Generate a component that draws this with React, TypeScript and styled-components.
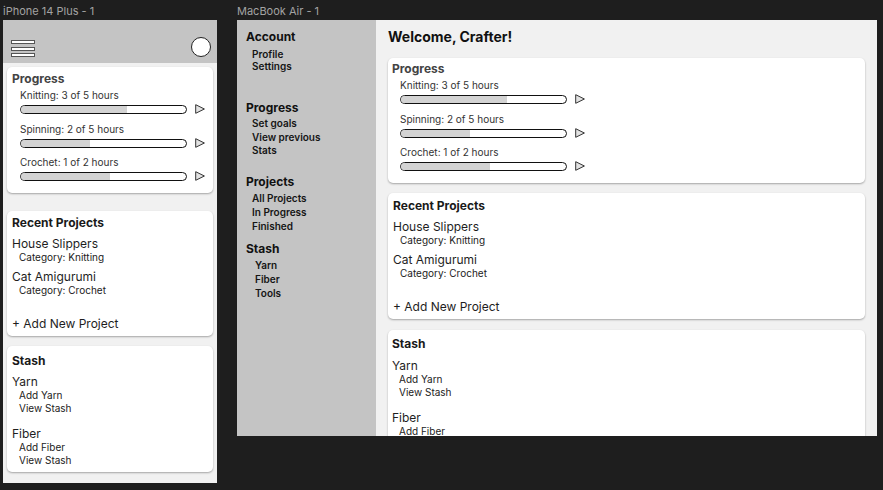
import React from "react";
import styled, { createGlobalStyle } from "styled-components";

const Global = createGlobalStyle`
  html, body { margin: 0; padding: 0; background: #1e1e1e; }
  body { font-family: Inter, "Noto Sans", sans-serif; }
  * { box-sizing: border-box; }
`;

const Canvas = styled.div`
  width: 883px;
  height: 490px;
  overflow: hidden;
  display: flex;
  align-items: flex-start;
  gap: 20px;
  padding: 4px 0 0 3px;
  background: #1e1e1e;
`;

const FrameColumn = styled.div`
  display: flex;
  flex-direction: column;
`;

const FrameLabel = styled.div`
  font-size: 11px;
  line-height: 15px;
  color: #a3a3a3;
  margin-bottom: 1px;
  white-space: nowrap;
`;

const PhoneFrame = styled.div`
  width: 214px;
  height: 463px;
  background: #f1f1f1;
  overflow: hidden;
  display: flex;
  flex-direction: column;
`;

const PhoneHeader = styled.header`
  height: 43px;
  flex: none;
  background: #c4c4c4;
  display: flex;
  justify-content: space-between;
  align-items: flex-end;
  padding: 0 6px 6px 8px;
`;

const Menu = styled.div`
  display: flex;
  flex-direction: column;
  gap: 2.5px;
`;

const MenuBar = styled.span`
  display: block;
  width: 24px;
  height: 4px;
  background: #fff;
  border: 1px solid #555;
`;

const Avatar = styled.div`
  width: 20px;
  height: 20px;
  border-radius: 50%;
  background: #fff;
  border: 1px solid #222;
`;

const PhoneBody = styled.div`
  display: flex;
  flex-direction: column;
  padding: 0 4px;
`;

const Card = styled.section<{ $h: number; $mt: number; $pt: number; $pl: number }>`
  flex: none;
  height: ${(p) => p.$h}px;
  margin-top: ${(p) => p.$mt}px;
  padding: ${(p) => p.$pt}px 8px 5px ${(p) => p.$pl}px;
  background: #fff;
  border-radius: 5px;
  box-shadow: 0 1px 2px rgba(0, 0, 0, 0.32);
  display: flex;
  flex-direction: column;
  overflow: hidden;
`;

const CardTitle = styled.h2<{ $muted?: boolean }>`
  margin: 0;
  font-size: 12px;
  line-height: 14px;
  font-weight: 700;
  color: ${(p) => (p.$muted ? "#434343" : "#1a1a1a")};
`;

const ProgressRow = styled.div<{ $mt: number }>`
  margin-top: ${(p) => p.$mt}px;
  padding-left: 8px;
  display: flex;
  flex-direction: column;
`;

const RowLabel = styled.div`
  font-size: 10px;
  line-height: 12px;
  color: #333;
  white-space: nowrap;
`;

const BarLine = styled.div`
  margin-top: 3px;
  display: flex;
  align-items: center;
  gap: 8px;
`;

const Track = styled.div`
  width: 167px;
  height: 9px;
  border: 1px solid #111;
  border-radius: 5px;
  background: #fff;
  overflow: hidden;
`;

const Fill = styled.div`
  height: 100%;
  background: #d3d3d3;
`;

const ItemName = styled.div<{ $mt: number }>`
  margin-top: ${(p) => p.$mt}px;
  font-size: 12px;
  line-height: 14px;
  color: #1e1e1e;
  white-space: nowrap;
`;

const ItemSub = styled.div`
  padding-left: 7px;
  font-size: 10px;
  line-height: 13px;
  color: #222;
  white-space: nowrap;
`;

const AddLink = styled.div`
  margin-top: auto;
  font-size: 12px;
  line-height: 14px;
  color: #1e1e1e;
  white-space: nowrap;
`;

const MacFrame = styled.div`
  width: 640px;
  height: 416px;
  background: #f1f1f1;
  overflow: hidden;
  display: flex;
`;

const Sidebar = styled.nav`
  width: 139px;
  flex: none;
  background: #c4c4c4;
  padding: 10px 0 0 9px;
  display: flex;
  flex-direction: column;
`;

const NavGroup = styled.div<{ $mt: number }>`
  margin-top: ${(p) => p.$mt}px;
  display: flex;
  flex-direction: column;
`;

const NavTitle = styled.div`
  font-size: 12px;
  line-height: 14px;
  font-weight: 700;
  color: #111;
`;

const NavList = styled.div<{ $gap: number; $indent: number }>`
  margin-top: ${(p) => p.$gap}px;
  padding-left: ${(p) => p.$indent}px;
  display: flex;
  flex-direction: column;
`;

const NavItem = styled.div<{ $lh: number }>`
  font-size: 10px;
  line-height: ${(p) => p.$lh}px;
  font-weight: 600;
  color: #151515;
  white-space: nowrap;
`;

const Main = styled.main`
  flex: 1;
  padding: 8px 12px 0 12px;
  display: flex;
  flex-direction: column;
`;

const Welcome = styled.h1`
  margin: 0;
  font-size: 14px;
  line-height: 17px;
  font-weight: 700;
  color: #111;
`;

const PlayIcon = () => (
  <svg width="10" height="10" viewBox="0 0 10 10">
    <polygon points="0.7,0.7 9.4,5 0.7,9.3" fill="#e2e2e2" stroke="#333" strokeWidth="1" strokeLinejoin="round" />
  </svg>
);

const progress = [
  { label: "Knitting: 3 of 5 hours", pct: 64 },
  { label: "Spinning: 2 of 5 hours", pct: 42 },
  { label: "Crochet: 1 of 2 hours", pct: 54 },
];

const ProgressRows = () => (
  <>
    {progress.map((p, i) => (
      <ProgressRow key={p.label} $mt={i === 0 ? 3 : i === 1 ? 9 : 8}>
        <RowLabel>{p.label}</RowLabel>
        <BarLine>
          <Track>
            <Fill style={{ width: `${p.pct}%` }} />
          </Track>
          <PlayIcon />
        </BarLine>
      </ProgressRow>
    ))}
  </>
);

const RecentProjects = () => (
  <>
    <CardTitle>Recent Projects</CardTitle>
    <ItemName $mt={7}>House Slippers</ItemName>
    <ItemSub>Category: Knitting</ItemSub>
    <ItemName $mt={6}>Cat Amigurumi</ItemName>
    <ItemSub>Category: Crochet</ItemSub>
    <AddLink>+ Add New Project</AddLink>
  </>
);

const StashContent = ({ first }: { first: number }) => (
  <>
    <CardTitle>Stash</CardTitle>
    <ItemName $mt={first}>Yarn</ItemName>
    <ItemSub>Add Yarn</ItemSub>
    <ItemSub>View Stash</ItemSub>
    <ItemName $mt={12}>Fiber</ItemName>
    <ItemSub>Add Fiber</ItemSub>
    <ItemSub>View Stash</ItemSub>
  </>
);

const navGroups = [
  { title: "Account", mt: 0, gap: 4, lh: 12, indent: 6, items: ["Profile", "Settings"] },
  { title: "Progress", mt: 29, gap: 2, lh: 13.5, indent: 6, items: ["Set goals", "View previous", "Stats"] },
  { title: "Projects", mt: 17.5, gap: 2, lh: 14, indent: 6, items: ["All Projects", "In Progress", "Finished"] },
  { title: "Stash", mt: 9, gap: 2, lh: 14, indent: 9, items: ["Yarn", "Fiber", "Tools"] },
];

export default function App() {
  return (
    <>
      <Global />
      <Canvas>
        <FrameColumn>
          <FrameLabel>iPhone 14 Plus - 1</FrameLabel>
          <PhoneFrame>
            <PhoneHeader>
              <Menu>
                <MenuBar />
                <MenuBar />
                <MenuBar />
              </Menu>
              <Avatar />
            </PhoneHeader>
            <PhoneBody>
              <Card $h={126} $mt={4} $pt={5} $pl={5}>
                <CardTitle $muted>Progress</CardTitle>
                <ProgressRows />
              </Card>
              <Card $h={125} $mt={18} $pt={5} $pl={5}>
                <RecentProjects />
              </Card>
              <Card $h={126} $mt={10} $pt={8} $pl={5}>
                <StashContent first={7} />
              </Card>
            </PhoneBody>
          </PhoneFrame>
        </FrameColumn>
        <FrameColumn>
          <FrameLabel>MacBook Air - 1</FrameLabel>
          <MacFrame>
            <Sidebar>
              {navGroups.map((g) => (
                <NavGroup key={g.title} $mt={g.mt}>
                  <NavTitle>{g.title}</NavTitle>
                  <NavList $gap={g.gap} $indent={g.indent}>
                    {g.items.map((it) => (
                      <NavItem key={it} $lh={g.lh}>
                        {it}
                      </NavItem>
                    ))}
                  </NavList>
                </NavGroup>
              ))}
            </Sidebar>
            <Main>
              <Welcome>Welcome, Crafter!</Welcome>
              <Card $h={125} $mt={13} $pt={4} $pl={4}>
                <CardTitle $muted>Progress</CardTitle>
                <ProgressRows />
              </Card>
              <Card $h={126} $mt={10} $pt={6} $pl={5}>
                <RecentProjects />
              </Card>
              <Card $h={140} $mt={11} $pt={7} $pl={4}>
                <StashContent first={8} />
              </Card>
            </Main>
          </MacFrame>
        </FrameColumn>
      </Canvas>
    </>
  );
}
